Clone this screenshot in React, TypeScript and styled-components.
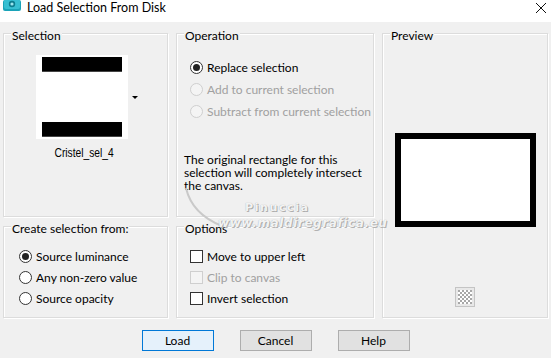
import React from "react";
import styled, { createGlobalStyle, css } from "styled-components";

const GlobalStyle = createGlobalStyle`
  html, body { margin: 0; padding: 0; background: #f0f0f0; }
  body { font-family: Lato, "Noto Sans", sans-serif; font-size: 12px; color: #000; }
  * { box-sizing: border-box; }
`;

const Window = styled.div`
  position: relative;
  width: 551px;
  height: 358px;
  background: #f0f0f0;
  overflow: hidden;
`;

const TitleBar = styled.div`
  height: 22px;
  background: #fff;
  display: flex;
  align-items: flex-start;
  padding: 0 4px 0 3px;
  gap: 6px;
`;

const TitleText = styled.div`
  flex: 1;
  font-size: 12.5px;
  line-height: 15px;
  color: #000;
`;

const Body = styled.div`
  display: grid;
  grid-template-columns: 165px 198px 166px;
  grid-template-rows: 184px 92px;
  gap: 9px 8px;
  padding: 11px 3px 0 3px;
`;

const Group = styled.div<{ $col: string; $row: string }>`
  position: relative;
  grid-column: ${(p) => p.$col};
  grid-row: ${(p) => p.$row};
  border: 1px solid #dcdcdc;
  box-shadow: inset 1px 1px 0 #fff, 1px 1px 0 #fff;
  display: flex;
  flex-direction: column;
`;

const Legend = styled.div`
  position: absolute;
  top: -6px;
  left: 7px;
  padding: 0 1px;
  background: #f0f0f0;
  line-height: 15px;
  font-size: 12px;
`;

const SelectionContent = styled.div`
  display: flex;
  flex-direction: column;
  align-items: center;
  padding: 21px 0 0 2px;
`;

const ThumbRow = styled.div`
  display: flex;
  align-items: center;
  gap: 4px;
`;

const Thumb = styled.div`
  width: 92px;
  height: 84px;
  background: #fff;
  padding: 2px 6px;
  display: flex;
  flex-direction: column;
  justify-content: space-between;
`;

const Bar = styled.div`
  height: 15px;
  background: #000;
  border-bottom: 1px solid #444;
`;

const DropArrow = styled.div`
  width: 0;
  height: 0;
  border-left: 3px solid transparent;
  border-right: 3px solid transparent;
  border-top: 3px solid #000;
`;

const Caption = styled.div`
  margin-top: 7px;
  margin-left: -4px;
  font-family: "Liberation Sans", Arial, sans-serif;
  font-size: 12.5px;
  line-height: 14px;
  transform: scaleX(0.82);
`;

const OperationContent = styled.div`
  display: flex;
  flex-direction: column;
  padding: 22px 8px 0 7px;
`;

const OptionList = styled.div<{ $pad: number; $top: number }>`
  display: flex;
  flex-direction: column;
  padding-left: ${(p) => p.$pad}px;
  padding-top: ${(p) => p.$top}px;
`;

const OptionRow = styled.div<{ $h: number; $gap: number; $disabled?: boolean }>`
  display: flex;
  align-items: center;
  height: ${(p) => p.$h}px;
  gap: ${(p) => p.$gap}px;
  color: ${(p) => (p.$disabled ? "#a0a0a0" : "#000")};
  line-height: 15px;
  white-space: nowrap;
`;

const RadioCircle = styled.span<{ $checked?: boolean; $disabled?: boolean }>`
  position: relative;
  width: 13px;
  height: 13px;
  border-radius: 50%;
  flex: none;
  border: 1px solid ${(p) => (p.$disabled ? "#cfcfcf" : "#333")};
  background: ${(p) => (p.$disabled ? "#f4f4f4" : "#fff")};
  ${(p) =>
    p.$checked &&
    css`
      &::after {
        content: "";
        position: absolute;
        left: 2px;
        top: 2px;
        width: 7px;
        height: 7px;
        border-radius: 50%;
        background: #222;
      }
    `}
`;

const CheckBox = styled.span<{ $disabled?: boolean }>`
  width: 13px;
  height: 13px;
  flex: none;
  border: 1px solid ${(p) => (p.$disabled ? "#cfcfcf" : "#333")};
  background: ${(p) => (p.$disabled ? "#f4f4f4" : "#fff")};
`;

const Description = styled.div`
  margin-top: 31px;
  line-height: 13px;
  font-size: 12px;
  white-space: nowrap;
`;

const PreviewContent = styled.div`
  flex: 1;
  display: flex;
  flex-direction: column;
  align-items: center;
  padding: 99px 0 10px 0;
`;

const PreviewImage = styled.div`
  width: 141px;
  height: 94px;
  border: 6px solid #000;
  background: #fff;
`;

const CheckerButton = styled.div`
  margin-top: auto;
  width: 20px;
  height: 20px;
  border: 1px solid #c4c4c4;
  background: #e8e8e8;
  display: flex;
  align-items: center;
  justify-content: center;
`;

const ButtonRow = styled.div`
  display: flex;
  justify-content: center;
  gap: 26px;
  margin-top: 12px;
`;

const Button = styled.button<{ $default?: boolean }>`
  width: 72px;
  height: 21px;
  padding: 0;
  font-family: Lato, "Noto Sans", sans-serif;
  font-size: 12px;
  line-height: 15px;
  color: #000;
  border: 1px solid ${(p) => (p.$default ? "#0078d7" : "#adadad")};
  background: ${(p) => (p.$default ? "#e5f1fb" : "#e1e1e1")};
`;

const Watermark = styled.div`
  position: absolute;
  left: 180px;
  top: 184px;
  width: 230px;
  height: 50px;
  pointer-events: none;
`;

const WmArc = styled.svg`
  position: absolute;
  left: 0;
  top: 0;
`;

const WmName = styled.div`
  position: absolute;
  left: 65px;
  top: 18px;
  font-family: "DejaVu Sans", sans-serif;
  font-weight: bold;
  font-size: 11px;
  line-height: 12px;
  letter-spacing: 1.6px;
  color: rgba(255, 255, 255, 0.9);
  text-shadow: 0 0 1px #9a9a9a, 1px 1px 0 #b0b0b0;
`;

const WmUrl = styled.div`
  position: absolute;
  left: 38px;
  top: 33px;
  font-family: "DejaVu Sans", sans-serif;
  font-weight: bold;
  font-style: italic;
  font-size: 12px;
  line-height: 13px;
  letter-spacing: 0.6px;
  color: rgba(255, 255, 255, 0.9);
  text-shadow: 0 0 1px #9a9a9a, 1px 1px 0 #b4b4b4;
`;

const AppIcon = () => (
  <svg width="18" height="12" viewBox="0 0 18 12">
    <rect x="0" y="0" width="18" height="11" rx="2" fill="#1aa3b8" />
    <rect x="1" y="-2" width="16" height="11" rx="2" fill="#37bfd2" />
    <circle cx="9" cy="4" r="3.2" fill="#0d7c8e" />
    <circle cx="9" cy="4" r="1.6" fill="#9be3ee" />
  </svg>
);

const CloseIcon = () => (
  <svg width="12" height="12" viewBox="0 0 12 12" style={{ marginTop: 2 }}>
    <path d="M1 1 L11 11 M11 1 L1 11" stroke="#111" strokeWidth="1" />
  </svg>
);

const CheckerIcon = () => (
  <svg width="14" height="14" viewBox="0 0 14 14">
    <rect width="14" height="14" fill="#fff" />
    {[0, 1, 2, 3, 4, 5, 6].map((r) =>
      [0, 1, 2, 3, 4, 5, 6].map((c) =>
        (r + c) % 2 === 0 ? (
          <rect key={`${r}-${c}`} x={c * 2} y={r * 2} width="2" height="2" fill="#a8a8a8" />
        ) : null
      )
    )}
  </svg>
);

type Opt = { label: string; checked?: boolean; disabled?: boolean };

const RadioGroup = ({ items, pad, top, h, gap }: { items: Opt[]; pad: number; top: number; h: number; gap: number }) => (
  <OptionList $pad={pad} $top={top}>
    {items.map((it) => (
      <OptionRow key={it.label} $h={h} $gap={gap} $disabled={it.disabled}>
        <RadioCircle $checked={it.checked} $disabled={it.disabled} />
        {it.label}
      </OptionRow>
    ))}
  </OptionList>
);

const CheckGroup = ({ items, pad, top, h, gap }: { items: Opt[]; pad: number; top: number; h: number; gap: number }) => (
  <OptionList $pad={pad} $top={top}>
    {items.map((it) => (
      <OptionRow key={it.label} $h={h} $gap={gap} $disabled={it.disabled}>
        <CheckBox $disabled={it.disabled} />
        {it.label}
      </OptionRow>
    ))}
  </OptionList>
);

export default function App() {
  return (
    <>
      <GlobalStyle />
      <Window>
        <TitleBar>
          <AppIcon />
          <TitleText>Load Selection From Disk</TitleText>
          <CloseIcon />
        </TitleBar>
        <Body>
          <Group $col="1" $row="1">
            <Legend>Selection</Legend>
            <SelectionContent>
              <ThumbRow>
                <Thumb>
                  <Bar />
                  <Bar />
                </Thumb>
                <DropArrow />
              </ThumbRow>
              <Caption>Cristel_sel_4</Caption>
            </SelectionContent>
          </Group>
          <Group $col="2" $row="1">
            <Legend>Operation</Legend>
            <OperationContent>
              <RadioGroup
                pad={6}
                top={0}
                h={22}
                gap={4}
                items={[
                  { label: "Replace selection", checked: true },
                  { label: "Add to current selection", disabled: true },
                  { label: "Subtract from current selection", disabled: true },
                ]}
              />
              <Description>
                The original rectangle for this
                <br />
                selection will completely intersect
                <br />
                the canvas.
              </Description>
            </OperationContent>
          </Group>
          <Group $col="3" $row="1 / span 2">
            <Legend>Preview</Legend>
            <PreviewContent>
              <PreviewImage />
              <CheckerButton>
                <CheckerIcon />
              </CheckerButton>
            </PreviewContent>
          </Group>
          <Group $col="1" $row="2">
            <Legend>Create selection from:</Legend>
            <RadioGroup
              pad={15}
              top={19}
              h={21}
              gap={4}
              items={[
                { label: "Source luminance", checked: true },
                { label: "Any non-zero value" },
                { label: "Source opacity" },
              ]}
            />
          </Group>
          <Group $col="2" $row="2">
            <Legend>Options</Legend>
            <CheckGroup
              pad={13}
              top={19}
              h={21}
              gap={4}
              items={[
                { label: "Move to upper left" },
                { label: "Clip to canvas", disabled: true },
                { label: "Invert selection" },
              ]}
            />
          </Group>
        </Body>
        <ButtonRow>
          <Button $default>Load</Button>
          <Button>Cancel</Button>
          <Button>Help</Button>
        </ButtonRow>
        <Watermark>
          <WmArc width="60" height="50" viewBox="0 0 60 50">
            <path d="M6 4 Q 12 30 42 42" stroke="#c9c9c9" strokeWidth="2" fill="none" />
          </WmArc>
          <WmName>Pinuccia</WmName>
          <WmUrl>www.maldiregrafica.eu</WmUrl>
        </Watermark>
      </Window>
    </>
  );
}
